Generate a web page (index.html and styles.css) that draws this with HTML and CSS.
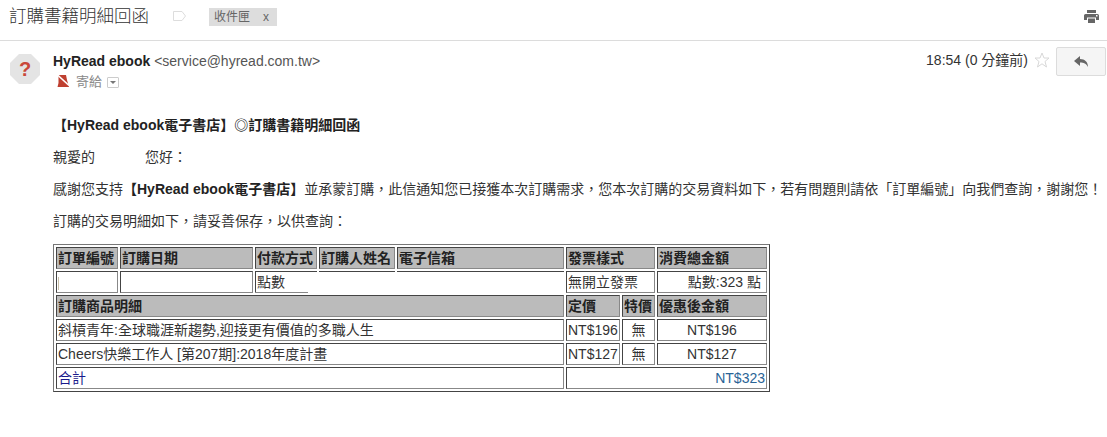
FILE: index.html
```html
<!DOCTYPE html>
<html lang="zh-Hant">
<head>
<meta charset="utf-8">
<title>訂購書籍明細回函</title>
<link rel="stylesheet" href="styles.css">
</head>
<body>
<header class="subject-bar">
  <h1 class="subject">訂購書籍明細回函</h1>
  <svg class="label-icon" width="15" height="12" viewBox="0 0 15 12"><path d="M1.500 1.500H10L13.500 6L10 10.500H1.500Z" fill="#fff" stroke="#ddd"/></svg>
  <span class="tag">收件匣<span class="tag-x">x</span></span>
  <svg class="print-icon" width="15" height="13" viewBox="0 0 15 13"><path fill="#666" d="M3 0H12V3H3ZM1.500 4H13.500A1.500 1.500 0 0 1 15 5.500V10H12V7.500H3V10H0V5.500A1.500 1.500 0 0 1 1.500 4ZM4 8.500H11V13H4Z"/><rect x="12" y="5" width="1.500" height="1.500" fill="#fff"/></svg>
</header>
<section class="message-head">
  <svg class="avatar" width="30" height="30" viewBox="0 0 30 30"><path fill="#e4e4e4" d="M9 0H21L30 9V21L21 30H9L0 21V9Z"/></svg>
  <span class="avatar-q">?</span>
  <div class="sender">
    <div class="from"><b>HyRead ebook</b> <span class="addr">&lt;service@hyread.com.tw&gt;</span></div>
    <div class="to">
      <svg class="imp-icon" width="12" height="13" viewBox="0 0 12 13"><path fill="#bf3f30" d="M1.500 1H9L10 6L12 13H0.500L1.500 9Z"/><path d="M0 0.500L12 11.500" stroke="#fff" stroke-width="1.600"/></svg>
      <span class="to-text">寄給</span>
      <span class="drop"><i></i></span>
    </div>
  </div>
  <div class="meta">
    <span class="time">18:54 (0 分鐘前)</span>
    <svg class="star" width="16" height="16" viewBox="0 0 16 16"><path fill="none" stroke="#d8d8d8" d="M8 1L10 6H15L11 9.500L12.500 15L8 11.800L3.500 15L5 9.500L1 6H6Z"/></svg>
    <button class="reply"><svg width="14" height="11" viewBox="0 0 14 11"><path fill="#666" d="M6 0V3C11 3 14 6 14 11C12 7.500 10 6.500 6 6.500V10L0 5Z"/></svg></button>
  </div>
</section>
<main class="mail">
  <p class="heading"><b>【HyRead ebook電子書店】◎訂購書籍明細回函</b></p>
  <p class="greet"><span>親愛的</span><span class="hello">您好：</span></p>
  <p class="thanks">感謝您支持<b>【HyRead ebook電子書店】</b>並承蒙訂購，此信通知您已接獲本次訂購需求，您本次訂購的交易資料如下，若有問題則請依「訂單編號」向我們查詢，謝謝您！</p>
  <p class="note">訂購的交易明細如下，請妥善保存，以供查詢：</p>
  <table class="order">
    <colgroup>
      <col class="c1"><col class="c2"><col class="c3"><col class="c4"><col class="c5"><col class="c6"><col class="c7"><col class="c8">
    </colgroup>
    <tr class="hd">
      <td>訂單編號</td><td>訂購日期</td><td>付款方式</td><td>訂購人姓名</td><td>電子信箱</td><td colspan="2">發票樣式</td><td>消費總金額</td>
    </tr>
    <tr>
      <td class="nb"><span class="caret"></span></td><td></td>
      <td class="open" colspan="3">點數<span class="under"></span><span class="tick t1"></span><span class="tick t2"></span><span class="tick t3"></span></td>
      <td colspan="2">無開立發票</td><td class="pts">點數:323 點</td>
    </tr>
    <tr class="hd">
      <td colspan="5">訂購商品明細</td><td>定價</td><td>特價</td><td>優惠後金額</td>
    </tr>
    <tr>
      <td colspan="5">斜槓青年:全球職涯新趨勢,迎接更有價值的多職人生</td><td>NT$196</td><td class="ctr">無</td><td class="ctr">NT$196</td>
    </tr>
    <tr>
      <td colspan="5">Cheers快樂工作人 [第207期]:2018年度計畫</td><td>NT$127</td><td class="ctr">無</td><td class="ctr">NT$127</td>
    </tr>
    <tr>
      <td colspan="5" class="sum">合計</td><td colspan="3" class="total">NT$323</td>
    </tr>
  </table>
</main>
</body>
</html>
```
FILE: styles.css
```css
* { box-sizing: border-box; }
html, body { margin: 0; padding: 0; }
body {
  width: 1107px;
  height: 437px;
  overflow: hidden;
  background: #fff;
  color: #222;
  font: 14px/18px "Liberation Sans", "Noto Sans CJK TC", sans-serif;
  text-spacing-trim: space-all;
}
.subject-bar {
  height: 41px;
  border-bottom: 1px solid #dcdcdc;
  display: flex;
  align-items: flex-start;
  padding: 6px 8px 0 9px;
  position: relative;
}
.subject {
  margin: 0;
  font-size: 17.500px;
  font-weight: 300;
  line-height: 20px;
  color: #333;
  width: 140px;
  white-space: nowrap;
}
.label-icon { margin: 4px 0 0 23px; }
.tag {
  margin: 2px 0 0 22px;
  height: 18px;
  width: 68px;
  background: #ddd;
  color: #666;
  font-size: 12px;
  line-height: 18px;
  padding-left: 5px;
  display: flex;
}
.tag-x { margin-left: 13px; }
.print-icon { margin: 4px 0 0 auto; }
.message-head {
  height: 62px;
  display: flex;
  position: relative;
  padding: 13px 0 0 10px;
}
.avatar-q {
  position: absolute;
  left: 10px;
  top: 19px;
  width: 30px;
  text-align: center;
  font-size: 20px;
  font-weight: 700;
  color: #c9483a;
}
.sender { margin-left: 13px; }
.from { line-height: 14px; margin-top: 0; white-space: nowrap; }
.from b { color: #222; }
.addr { color: #555; }
.to { display: flex; align-items: center; height: 14px; margin-top: 7px; color: #777; font-size: 13px; }
.imp-icon { margin: -3px 7px 0 4px; }
.to-text { color: #888; }
.drop {
  width: 12px; height: 11px; margin-left: 5px;
  border: 1px solid #ccc; border-radius: 1px;
  display: flex; align-items: center; justify-content: center;
}
.drop i { border: 3px solid transparent; border-top-color: #777; border-bottom: 0; }
.meta {
  margin-left: auto;
  display: flex;
  align-items: flex-start;
  padding-right: 1px;
  margin-top: -7px;
}
.time { color: #333; margin-top: 4px; white-space: nowrap; }
.star { margin: 5px 6px 0 6px; }
.reply {
  width: 50px;
  height: 29px;
  margin: 0;
  padding: 0;
  background: #f5f5f5;
  border: 1px solid #dcdcdc;
  border-radius: 2px;
  display: flex;
  align-items: center;
  justify-content: center;
}
.mail { padding: 0 0 0 53px; width: 1107px; }
.mail p { margin: 0; white-space: nowrap; color: #333; line-height: 16px; }
.mail .heading { margin-top: 14px; color: #222; }
.mail .greet { margin-top: 16px; }
.hello { margin-left: 50px; }
.mail .thanks { margin-top: 16px; }
.mail .thanks b { color: #222; }
.mail .note { margin-top: 16px; }
.order {
  margin-top: 15px;
  width: 717px;
  table-layout: fixed;
  border-collapse: separate;
  border-spacing: 2px;
  border: 1px solid;
  border-color: #777 #444 #444 #777;
  padding: 0;
  color: #333;
}
.c1 { width: 62px; }
.c2 { width: 133px; }
.c3 { width: 62px; }
.c4 { width: 76px; }
.c5 { width: 167px; }
.c6 { width: 54px; }
.c7 { width: 33px; }
.c8 { width: 110px; }
.order td {
  height: 22px;
  padding: 0 1px;
  border: 1px solid;
  border-color: #444 #888 #888 #444;
  line-height: 18px;
  white-space: nowrap;
  overflow: hidden;
}
.order .hd td { background: #bbb; color: #222; font-weight: 700; }
.order .ctr { text-align: center; }
.order .pts { text-align: right; padding-right: 5px; }
.order .sum { color: #1a1a8c; }
.order .total { color: #2a6496; text-align: right; padding-right: 1px; }
.order .open { border-color: #fff; border-left-color: #444; position: relative; overflow: visible; }
.under { position: absolute; left: -1px; bottom: -1px; width: 53px; height: 1px; background: #888; }
.tick { position: absolute; top: -1px; height: 2px; border-top: 1px solid #444; }
.t1 { left: -1px; width: 62px; }
.t2 { left: 63px; width: 76px; }
.t3 { left: 141px; width: 167px; }
.caret { display: inline-block; width: 1px; height: 13px; background: #c8bfa8; vertical-align: middle; margin-left: 0; }
```
